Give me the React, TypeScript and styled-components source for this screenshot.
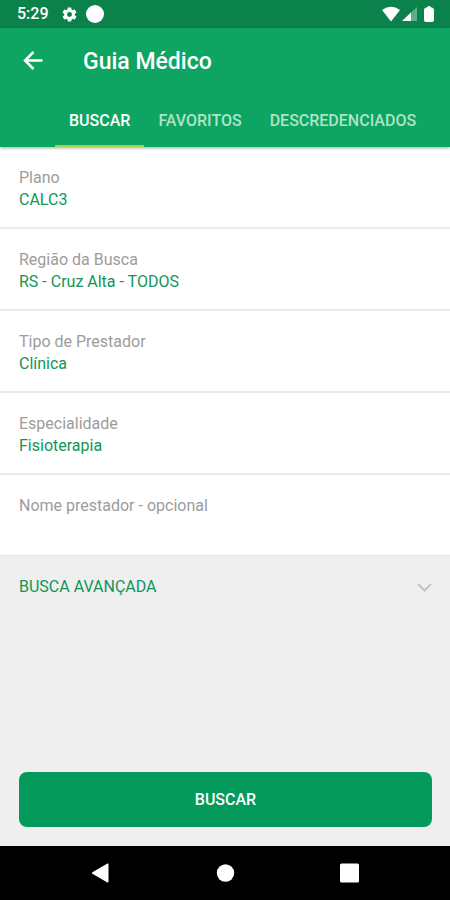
import React, { useState } from "react";
import styled, { createGlobalStyle } from "styled-components";

const GlobalStyle = createGlobalStyle`
  *, *::before, *::after { box-sizing: border-box; }
  body { margin: 0; background: #efefef; font-family: Roboto, "Liberation Sans", sans-serif; }
  button, input { font: inherit; color: inherit; border: 0; padding: 0; margin: 0; background: none; }
  button { cursor: pointer; }
  svg { display: block; }
`;

const Screen = styled.div`
  display: flex;
  flex-direction: column;
  min-height: 100vh;
  background: #efefef;
`;

const StatusBar = styled.div`
  display: flex;
  align-items: center;
  justify-content: space-between;
  height: 28px;
  padding: 0 16px 0 17px;
  background: #0b824c;
  color: #fff;
`;

const StatusGroup = styled.div<{ $gap: number }>`
  display: flex;
  align-items: center;
  gap: ${(p) => p.$gap}px;
`;

const Clock = styled.time`
  margin-right: 4px;
  font-size: 16px;
  font-weight: 500;
  line-height: 28px;
`;

const Header = styled.header`
  position: relative;
  background: #0da561;
  color: #fff;
  box-shadow: 0 1px 3px rgba(0, 0, 0, 0.35);
`;

const TitleBar = styled.div`
  display: flex;
  align-items: center;
  gap: 38px;
  height: 66px;
  padding: 0 20px;
`;

const BackButton = styled.button`
  width: 25px;
  height: 25px;
`;

const Title = styled.h1`
  margin: 0;
  padding-top: 2px;
  font-size: 23px;
  font-weight: 500;
  line-height: 28px;
`;

const Tabs = styled.div`
  display: flex;
  height: 53px;
  padding-left: 55px;
`;

const Tab = styled.button<{ $active: boolean }>`
  padding: 0 14px;
  font-size: 16px;
  font-weight: 500;
  white-space: nowrap;
  color: ${(p) => (p.$active ? "#fff" : "#aee3c9")};
  box-shadow: ${(p) => (p.$active ? "inset 0 -2px #a5d04a" : "none")};
`;

const Main = styled.main`
  display: flex;
  flex: 1;
  flex-direction: column;
`;

const fieldBox = `
  display: flex;
  flex-direction: column;
  width: 100%;
  padding: 20px 19px 16px;
  background: #fff;
  border-bottom: 2px solid #ebebec;
  font-size: 16px;
  line-height: 22px;
  text-align: left;
`;

const FieldButton = styled.button`
  && { ${fieldBox} }
`;

const FieldLabel = styled.label`
  ${fieldBox}
  && { border-bottom-color: #e6e6e6; border-bottom-width: 1px; }
`;

const Caption = styled.span`
  color: #9c9c9c;
`;

const Value = styled.span`
  color: #119558;
`;

const TextInput = styled.input`
  && {
    width: 100%;
    height: 22px;
    color: #119558;
    outline: none;
  }
`;

const AdvancedButton = styled.button`
  && {
    display: flex;
    align-items: center;
    justify-content: space-between;
    width: 100%;
    padding: 20px 18px 20px 19px;
    color: #119558;
    font-size: 16px;
    line-height: 22px;
  }
`;

const Actions = styled.div`
  margin-top: auto;
  padding: 19px 18px 19px 19px;
`;

const SearchButton = styled.button`
  && {
    width: 100%;
    height: 55px;
    border-radius: 8px;
    background: #039a5b;
    color: #fff;
    font-size: 16px;
    font-weight: 500;
  }
`;

const NavBar = styled.nav`
  display: flex;
  align-items: center;
  justify-content: center;
  gap: 100px;
  height: 54px;
  background: #000;
`;

const NavButton = styled.button`
  width: 24px;
  height: 24px;
`;

const fields = [
  { label: "Plano", value: "CALC3" },
  { label: "Região da Busca", value: "RS - Cruz Alta - TODOS" },
  { label: "Tipo de Prestador", value: "Clínica" },
  { label: "Especialidade", value: "Fisioterapia" },
];

const tabs = ["BUSCAR", "FAVORITOS", "DESCREDENCIADOS"];

const GearIcon = () => (
  <svg width="17" height="17" viewBox="0 0 24 24" fill="currentColor" aria-hidden="true">
    <path d="M19.43 12.98c.04-.32.07-.64.07-.98s-.03-.66-.07-.98l2.11-1.65c.19-.15.24-.42.12-.64l-2-3.46c-.12-.22-.39-.3-.61-.22l-2.49 1c-.52-.4-1.08-.73-1.69-.98l-.38-2.65A.488.488 0 0 0 14 2h-4c-.25 0-.46.18-.49.42l-.38 2.65c-.61.25-1.17.59-1.69.98l-2.49-1c-.23-.09-.49 0-.61.22l-2 3.46c-.13.22-.07.49.12.64l2.11 1.65c-.04.32-.07.65-.07.98s.03.66.07.98l-2.11 1.65c-.19.15-.24.42-.12.64l2 3.46c.12.22.39.3.61.22l2.49-1c.52.4 1.08.73 1.69.98l.38 2.65c.03.24.24.42.49.42h4c.25 0 .46-.18.49-.42l.38-2.65c.61-.25 1.17-.59 1.69-.98l2.49 1c.23.09.49 0 .61-.22l2-3.46c.12-.22.07-.49-.12-.64l-2.11-1.65zM12 15.5a3.5 3.5 0 1 1 0-7 3.5 3.5 0 0 1 0 7z" />
  </svg>
);

export default function App() {
  const [activeTab, setActiveTab] = useState("BUSCAR");
  const [name, setName] = useState("");

  return (
    <>
      <GlobalStyle />
      <Screen>
        <StatusBar>
          <StatusGroup $gap={8}>
            <Clock>5:29</Clock>
            <GearIcon />
            <svg width="18" height="18" viewBox="0 0 18 18" fill="currentColor" aria-hidden="true">
              <circle cx="9" cy="9" r="9" />
            </svg>
          </StatusGroup>
          <StatusGroup $gap={2}>
            <svg width="18" height="16" viewBox="0 0 18 16" fill="currentColor" aria-hidden="true">
              <path d="M0 4Q9-2.400 18 4L9 15.500Z" />
            </svg>
            <svg width="16" height="16" viewBox="0 0 16 16" fill="currentColor" aria-hidden="true">
              <path d="M15 1V15H0Z" opacity=".35" />
              <path d="M9 6.600V15H0Z" />
            </svg>
            <svg width="14" height="16" viewBox="0 0 14 16" fill="currentColor" aria-hidden="true">
              <path d="M7 1.500Q7 0 9 0Q11 0 11 1.500H12Q14 2 14 4V14Q14 16 12 16H6Q4 16 4 14V4Q4 2 6 1.500Z" />
            </svg>
          </StatusGroup>
        </StatusBar>

        <Header>
          <TitleBar>
            <BackButton type="button" aria-label="Voltar">
              <svg width="25" height="25" viewBox="0 0 25 25" fill="none" stroke="currentColor" strokeWidth="2.500" aria-hidden="true">
                <path d="M22.500 11.500H5M13.500 3L5 11.500L13.500 20" />
              </svg>
            </BackButton>
            <Title>Guia Médico</Title>
          </TitleBar>
          <Tabs role="tablist">
            {tabs.map((tab) => (
              <Tab
                key={tab}
                type="button"
                role="tab"
                aria-selected={tab === activeTab}
                $active={tab === activeTab}
                onClick={() => setActiveTab(tab)}
              >
                {tab}
              </Tab>
            ))}
          </Tabs>
        </Header>

        <Main>
          {fields.map((field) => (
            <FieldButton key={field.label} type="button">
              <Caption>{field.label}</Caption>
              <Value>{field.value}</Value>
            </FieldButton>
          ))}
          <FieldLabel>
            <Caption>Nome prestador - opcional</Caption>
            <TextInput type="text" value={name} onChange={(e) => setName(e.target.value)} />
          </FieldLabel>
          <AdvancedButton type="button" aria-expanded={false}>
            BUSCA AVANÇADA
            <svg width="15" height="9" viewBox="0 0 15 9" fill="none" stroke="#c4c4c4" strokeWidth="2" aria-hidden="true">
              <path d="M1 1L7.500 7.500L14 1" />
            </svg>
          </AdvancedButton>
          <Actions>
            <SearchButton type="button">BUSCAR</SearchButton>
          </Actions>
        </Main>

        <NavBar aria-label="Sistema">
          <NavButton type="button" aria-label="Voltar à tela anterior">
            <svg width="24" height="24" viewBox="0 0 24 24" fill="#fff" aria-hidden="true">
              <path d="M19.500 3.200V20.800Q19.500 22 18.400 21.400L3.400 12.700Q2.400 12 3.400 11.300L18.400 2.600Q19.500 2 19.500 3.200Z" />
            </svg>
          </NavButton>
          <NavButton type="button" aria-label="Início">
            <svg width="24" height="24" viewBox="0 0 24 24" fill="#fff" aria-hidden="true">
              <circle cx="12.500" cy="12" r="8.700" />
            </svg>
          </NavButton>
          <NavButton type="button" aria-label="Aplicativos recentes">
            <svg width="24" height="24" viewBox="0 0 24 24" fill="#fff" aria-hidden="true">
              <rect x="3" y="2.500" width="19" height="19" rx="1.500" />
            </svg>
          </NavButton>
        </NavBar>
      </Screen>
    </>
  );
}
